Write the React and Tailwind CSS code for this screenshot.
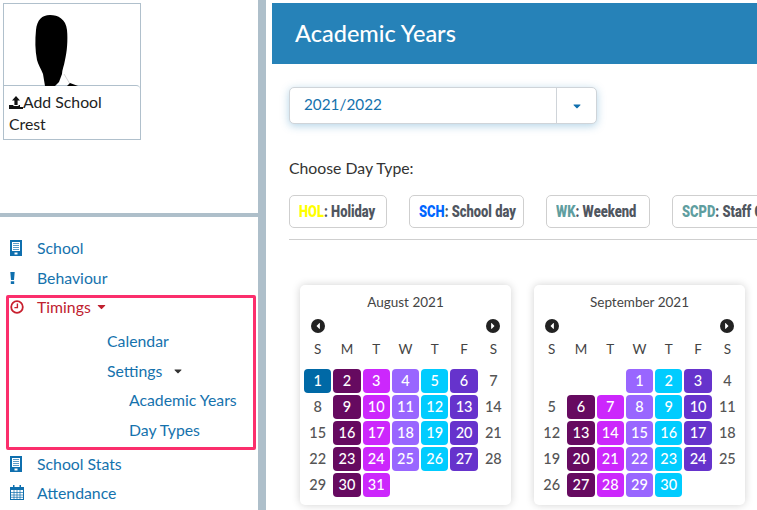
import { FaCaretDown, FaCaretLeft, FaCaretRight } from 'react-icons/fa';

const colours = {
    1: 'bg-[#0069a6]',
    2: 'bg-[#660a60]',
    3: 'bg-[#cc27fc]',
    4: 'bg-[#9966ff]',
    5: 'bg-[#00ccff]',
    6: 'bg-[#6633cc]',
};

const august = { title: 'August 2021', start: 0, days: 31, special: { 1: 1 } };
const september = { title: 'September 2021', start: 3, days: 30, special: {} };

const Silhouette = () => (
    <svg viewBox="0 0 136 82" className="block h-[82px] w-[136px]">
        <path d="M41 82 L39 70 C37 65 34 60 33 56 C31 46 31 36 32 26 C33 16 38 11 46 11 C54 11 62 15 63 26 C64 36 63 48 61 56 C60 62 58 66 58 70 L55 78 L51 82 Z" fill="#000" />
        <path d="M60 70 L66 80" stroke="#bbb" strokeWidth="0.6" fill="none" />
        <path d="M63 82 L66 79 L74 82 Z" fill="#000" />
    </svg>
);

const UploadIcon = () => (
    <svg viewBox="0 0 14 13" className="inline-block h-[13px] w-[14px] align-[-1px]">
        <path d="M7 0 L11 4.5 H8.6 V9 H5.4 V4.5 H3 Z" fill="#111" />
        <path d="M0 9 H4.4 V10 H9.6 V9 H11 V11 H14 V13 H0 Z" fill="#111" />
    </svg>
);

const BuildingIcon = () => (
    <svg viewBox="0 0 12 16" className="h-[16px] w-[12px]">
        <path fillRule="evenodd" d="M0 0 H12 V16 H0 Z M2 2 V11 H10 V2 Z M4.5 12.5 V14.5 H7.5 V12.5 Z" fill="#0f6fae" />
        <path d="M3 3 H9 V4 H3 Z M3 5 H9 V6 H3 Z M3 7 H9 V8 H3 Z M3 9 H9 V10 H3 Z" fill="#5b9bc8" />
    </svg>
);

const BangIcon = () => (
    <svg viewBox="0 0 5 12" className="h-[12px] w-[5px]">
        <path d="M0.3 0 H4.7 L4 8 H1 Z M0.8 9.3 H4.2 V12 H0.8 Z" fill="#0f6fae" />
    </svg>
);

const ClockIcon = () => (
    <svg viewBox="0 0 14 14" className="h-[14px] w-[14px]">
        <circle cx="7" cy="7" r="5.8" fill="none" stroke="#c8202f" strokeWidth="1.8" />
        <path d="M7.4 3.5 V7.6 H4.4" fill="none" stroke="#c8202f" strokeWidth="1.4" />
    </svg>
);

const CalendarIcon = () => (
    <svg viewBox="0 0 14 15" className="h-[15px] w-[14px]">
        <path fillRule="evenodd" d="M0 2 H14 V15 H0 Z M1 5 V14 H13 V5 Z" fill="#0f6fae" />
        <path d="M3 0 H4.5 V3.5 H3 Z M9.5 0 H11 V3.5 H9.5 Z" fill="#0f6fae" />
        <path d="M1 7.5 H13 M1 10 H13 M1 12.3 H13 M4 5 V14 M7 5 V14 M10 5 V14" stroke="#0f6fae" strokeWidth="0.7" />
    </svg>
);

const SideItem = ({ icon, label, className, textClass, children }) => (
    <div className={`flex items-center ${className || ''}`}>
        <span className="w-[27px] pl-[10px] flex text-[#0f6fae]">{icon}</span>
        <span className={`ml-[10px] ${textClass || 'text-[#1572ad]'}`}>{label}</span>
        {children}
    </div>
);

const Chip = ({ code, colour, label, width }) => (
    <div className={`h-[33px] shrink-0 flex items-center pl-[9px] border border-[#cfcfcf] rounded-[5px] bg-white whitespace-nowrap font-black text-[17px] text-[#50565f] [font-family:Roboto,sans-serif] ${width}`}>
        <span className="inline-block origin-left scale-x-[0.76]">
            <span className={colour}>{code}</span>: {label}
        </span>
    </div>
);

const RoundArrow = ({ right }) => (
    <span className="w-[14px] h-[14px] rounded-full bg-[#222] flex items-center justify-center text-white text-[10px]">
        {right ? <FaCaretRight /> : <FaCaretLeft />}
    </span>
);

const Calendar = ({ month }) => {
    const cells = [];
    for (let i = 0; i < month.start; i++) cells.push(null);
    for (let d = 1; d <= month.days; d++) cells.push(d);

    return (
        <div className="w-[211px] h-[220px] shrink-0 bg-white rounded-[5px] shadow-[0_0_8px_rgba(0,0,0,0.18)] px-[4px] pt-[8px]">
            <div className="text-center text-[13.5px] leading-[18px] text-[#444]">{month.title}</div>
            <div className="flex justify-between px-[7px] mt-[8px]">
                <RoundArrow />
                <RoundArrow right />
            </div>
            <div className="grid grid-cols-7 gap-x-[2px] mt-[4px] h-[29px] text-[13.5px] text-[#444] text-center leading-[24px]">
                {['S', 'M', 'T', 'W', 'T', 'F', 'S'].map((d, i) => <span key={i}>{d}</span>)}
            </div>
            <div className="grid grid-cols-7 gap-x-[2px] gap-y-[2px] mt-[3px]">
                {cells.map((d, i) => {
                    const col = i % 7;
                    const type = d && (month.special[d] ? month.special[d] : col >= 1 && col <= 5 ? col + 1 : 0);
                    return (
                        <div key={i} className={`h-[24px] rounded-[4px] flex items-center justify-center text-[14.5px] font-medium ${type ? `${colours[type]} text-white` : 'text-[#555]'}`}>
                            {d}
                        </div>
                    );
                })}
            </div>
        </div>
    );
};

const App = () => {
    return (
        <div className="flex h-[510px] w-[757px] overflow-hidden bg-white text-[15.8px] [font-family:Lato,'Open_Sans',sans-serif]">
            <aside className="w-[266px] shrink-0 border-r-[8px] border-[#aebfca]">
                <div className="h-[217px] border-b-[4px] border-[#aebfca] pt-[3px] pl-[3px]">
                    <div className="w-[138px] h-[137px] border border-[#b0c0cc]">
                        <Silhouette />
                        <div className="h-[54px] -mt-[1px] pl-[5px] pt-[5px] leading-[22px] text-[#222] border-t border-[#b0c0cc] rounded-tr-[4px]">
                            <UploadIcon />Add School
                            <br />
                            Crest
                        </div>
                    </div>
                </div>
                <div className="pt-[16px]">
                    <SideItem icon={<BuildingIcon />} label="School" className="h-[30px]" />
                    <SideItem icon={<BangIcon />} label="Behaviour" className="h-[30px]" />
                    <div className="mt-[2px] ml-[6px] w-[250px] h-[155px] border-[3px] border-[#fb2e6c] rounded-[2px]">
                        <div className="-ml-[9px] mt-[-3px]">
                            <SideItem icon={<ClockIcon />} label="Timings" className="h-[23px]" textClass="text-[#c0212f]">
                                <FaCaretDown className="ml-[4px] text-[#c0212f]" size={13} />
                            </SideItem>
                        </div>
                        <div className="pl-[98px]">
                            <div className="mt-[8px] h-[30px] leading-[30px] text-[#1572ad]">Calendar</div>
                            <div className="h-[30px] flex items-center text-[#1572ad]">
                                Settings
                                <FaCaretDown className="ml-[10px] text-[#333]" size={12} />
                            </div>
                            <div className="pl-[22px] text-[#1572ad]">
                                <div className="h-[30px] leading-[27px]">Academic Years</div>
                                <div className="h-[30px] leading-[27px] whitespace-nowrap">Day Types</div>
                            </div>
                        </div>
                    </div>
                    <SideItem icon={<BuildingIcon />} label="School Stats" className="h-[28px]" />
                    <SideItem icon={<CalendarIcon />} label="Attendance" className="h-[29px]" />
                </div>
            </aside>
            <main className="flex-1 min-w-0 pt-[3px] pl-[6px] overflow-hidden">
                <div className="h-[61px] bg-[#2682b8] flex items-center pl-[23px] text-white text-[23.5px] font-medium">
                    Academic Years
                </div>
                <div className="pl-[17px]">
                    <div className="mt-[23px] w-[308px] h-[37px] flex border border-[#cfd4d9] rounded-[5px] bg-white shadow-[0_2px_8px_rgba(38,130,184,0.35)]">
                        <div className="flex-1 flex items-center pl-[14px] pb-[2px] text-[15.3px] text-[#1572ad]">2021/2022</div>
                        <div className="w-[40px] border-l border-[#cfd4d9] flex items-center justify-center text-[#0f6fae]">
                            <FaCaretDown size={12} />
                        </div>
                    </div>
                    <div className="mt-[34px] h-[20px] leading-[20px] text-[#333]">Choose Day Type:</div>
                    <div className="mt-[17px] flex gap-[22px]">
                        <Chip code="HOL" colour="text-[#ffff00]" label="Holiday" width="w-[98px]" />
                        <Chip code="SCH" colour="text-[#0066ff]" label="School day" width="w-[115px]" />
                        <Chip code="WK" colour="text-[#5f9ea0]" label="Weekend" width="w-[104px]" />
                        <Chip code="SCPD" colour="text-[#5f9ea0]" label="Staff CPD" width="w-[120px]" />
                    </div>
                    <div className="mt-[11px] border-t border-[#cfcfcf] -mr-[10px]" />
                    <div className="mt-[45px] ml-[11px] flex gap-[23px]">
                        <Calendar month={august} />
                        <Calendar month={september} />
                    </div>
                </div>
            </main>
        </div>
    );
};

export default App;
